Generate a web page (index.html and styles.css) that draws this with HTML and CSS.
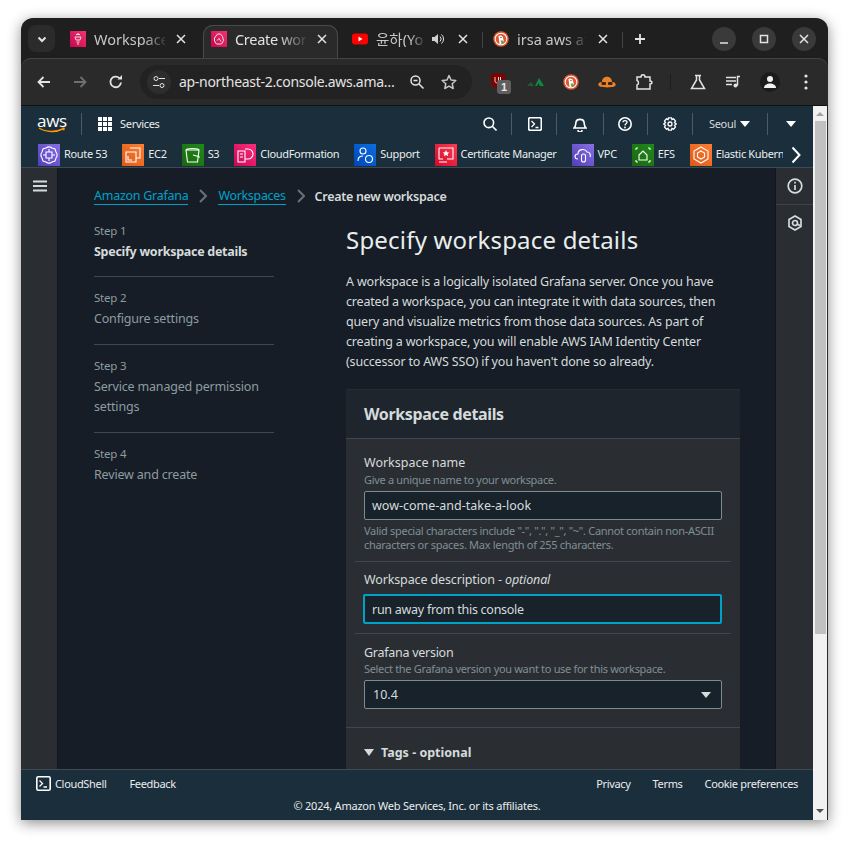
FILE: index.html
```html
<!DOCTYPE html>
<html lang="en">
<head>
<meta charset="utf-8">
<title>Create workspace</title>
<link rel="stylesheet" href="styles.css">
</head>
<body>
<div class="window">
  <div class="tabstrip">
    <div class="tab-search"><svg width="12" height="12" viewBox="0 0 12 12"><path d="M2.500 4.500 6 8l3.500-3.500" class="st-w2"/></svg></div>
    <div class="tab tab-1">
      <span class="fav fav-pink"><svg width="16" height="16" viewBox="0 0 16 16"><path d="M6 3.500h4M5 6h6l-1 3H6zM6.500 11h3M7 13h2M8 2v2" class="st-w1"/></svg></span>
      <span class="tab-title">Workspace</span>
      <svg class="tab-x" width="10" height="10" viewBox="0 0 10 10"><path d="M1 1l8 8M9 1l-8 8" class="st-w1-5"/></svg>
    </div>
    <div class="tab tab-active">
      <span class="fav fav-pink"><svg width="16" height="16" viewBox="0 0 16 16"><path d="M3.500 7 6.500 3h3l2 2.500 1 4-2 3.500h-5l-2-3zM6 9.500 8 7.500l2 3" class="st-w1"/></svg></span>
      <span class="tab-title">Create wor</span>
      <svg class="tab-x" width="10" height="10" viewBox="0 0 10 10"><path d="M1 1l8 8M9 1l-8 8" class="st-w1-5"/></svg>
    </div>
    <div class="tab tab-3">
      <span class="fav"><svg width="16" height="16" viewBox="0 0 16 16"><rect y="2.500" width="16" height="11" rx="3" fill="#f00"/><path d="M6.500 5.500 10.500 8l-4 2.500z" fill="#fff"/></svg></span>
      <span class="tab-title tab-title-yt">윤하(Yo</span>
      <svg class="tab-audio" width="14" height="14" viewBox="0 0 14 14"><path d="M1 5h2.500L7 2v10L3.500 9H1z" fill="#d0d0d0"/><path d="M9 4.500a3.500 3.500 0 0 1 0 5M10.500 2.500a6 6 0 0 1 0 9" class="st-w1"/></svg>
      <svg class="tab-x" width="10" height="10" viewBox="0 0 10 10"><path d="M1 1l8 8M9 1l-8 8" class="st-w1-5"/></svg>
    </div>
    <span class="tab-sep"></span>
    <div class="tab tab-4">
      <span class="fav"><svg width="16" height="16" viewBox="0 0 16 16"><circle cx="8" cy="8" r="7.800" fill="#de5833"/><circle cx="8" cy="8" r="6.300" fill="#fff"/><circle cx="8" cy="8" r="5.300" fill="#de5833"/><path d="M5.500 5c2-1.200 4.500-.5 4.500 2l.8 3-2.300 3H6.500z" fill="#fff"/><path d="M7.500 9.500l1 3.500 2-1.500-.5-2z" fill="#4caf50"/><circle cx="8" cy="6.500" r=".7" fill="#2d4f8e"/></svg></span>
      <span class="tab-title">irsa aws at</span>
      <svg class="tab-x" width="10" height="10" viewBox="0 0 10 10"><path d="M1 1l8 8M9 1l-8 8" class="st-w1-5"/></svg>
    </div>
    <span class="tab-sep"></span>
    <svg class="tab-new" width="12" height="12" viewBox="0 0 12 12"><path d="M6 1v10M1 6h10" class="st-w2-plain"/></svg>
    <div class="win-btns">
      <span class="win-btn"><svg width="10" height="10" viewBox="0 0 10 10"><path d="M1 9h8" class="st-w1-5"/></svg></span>
      <span class="win-btn"><svg width="10" height="10" viewBox="0 0 10 10"><rect x="1.500" y="1.500" width="7" height="7" class="st-w1-5"/></svg></span>
      <span class="win-btn"><svg width="10" height="10" viewBox="0 0 10 10"><path d="M1 1l8 8M9 1l-8 8" class="st-w1-5"/></svg></span>
    </div>
  </div>

  <div class="toolbar">
    <svg class="tb-back" width="16" height="16" viewBox="0 0 16 16"><path d="M14 8H3M7.500 3 2.500 8l5 5" class="st-w2-plain"/></svg>
    <svg class="tb-fwd" width="16" height="16" viewBox="0 0 16 16"><path d="M2 8h11M8.500 3l5 5-5 5" class="st-dim"/></svg>
    <svg class="tb-reload" width="16" height="16" viewBox="0 0 16 16"><path d="M13 8.500A5.300 5.300 0 1 1 11.500 4.200" class="st-w2-plain"/><path d="M9.500 5.500H14V1z" fill="#e3e3e3"/></svg>
    <div class="omnibox">
      <span class="tune"><svg width="14" height="14" viewBox="0 0 14 14"><circle cx="4" cy="3.500" r="2" class="st-w1"/><path d="M7 3.500h6M1 10.500h6" class="st-w1"/><circle cx="10" cy="10.500" r="2" class="st-w1"/></svg></span>
      <span class="url">ap-northeast-2.console.aws.ama…</span>
      <svg class="omni-zoom" width="16" height="16" viewBox="0 0 16 16"><circle cx="6.500" cy="6.500" r="4.500" class="st-w1-5"/><path d="M4.500 6.500h4M10 10l4.500 4.500" class="st-w1-5"/></svg>
      <svg class="omni-star" width="16" height="16" viewBox="0 0 16 16"><path d="M8 1.500l2 4.500 4.800.5-3.600 3.200 1 4.800L8 12.100l-4.200 2.400 1-4.800L1.200 6.500 6 6z" class="st-w1-5 st-round"/></svg>
    </div>
    <div class="ext">
      <span class="ext-ublock"><svg width="16" height="18" viewBox="0 0 16 18"><path d="M1 2.500 8 1l7 1.500v7C15 13 12 15.500 8 17 4 15.500 1 13 1 9.500z" fill="#800000"/><path d="M5 5v4c0 2.500 3.500 2.500 3.500 0V5M10.500 5v6" stroke="#ddd" stroke-width="1" fill="none"/></svg><span class="ublock-badge">1</span></span>
      <svg class="ext-mtn" width="20" height="12" viewBox="0 0 20 12"><path d="M9 10 13 2l5 8h-4l-1.500-3L11 10z" fill="#0d8a3f"/><path d="M1 10l4-4 3 4z" fill="#1f5c33"/></svg>
      <svg class="ext-ddg" width="16" height="16" viewBox="0 0 16 16"><circle cx="8" cy="8" r="7.800" fill="#de5833"/><circle cx="8" cy="8" r="6.300" fill="#fff"/><circle cx="8" cy="8" r="5.300" fill="#de5833"/><path d="M5.500 5c2-1.200 4.500-.5 4.500 2l.8 3-2.300 3H6.500z" fill="#fff"/><path d="M7.500 9.500l1 3.500 2-1.500-.5-2z" fill="#4caf50"/><circle cx="8" cy="6.500" r=".7" fill="#2d4f8e"/></svg>
      <svg class="ext-hat" width="18" height="14" viewBox="0 0 18 14"><path d="M4 7c0-7 10-7 10 0 3 0 4 1.500 3.500 3.500C16.500 13 2 13 .5 10.500 0 8.500 1 7 4 7z" fill="#e8832a"/><rect x="3.500" y="7" width="4.500" height="3" rx="1" fill="#3a2512"/><rect x="10" y="7" width="4.500" height="3" rx="1" fill="#3a2512"/></svg>
      <svg class="ext-puzzle" width="18" height="18" viewBox="0 0 18 18"><path d="M2 4h4c0-3 4-3 4 0h5v4c2.500 0 2.500 3 0 3v5H2v-4c2-.5 2-4 0-4.500z" class="st-w1-5"/></svg>
      <span class="ext-sep"></span>
      <svg class="ext-flask" width="16" height="16" viewBox="0 0 16 16"><path d="M5 1.500h6M6.500 1.500V6L1.500 14.500h13L9.500 6V1.500" class="st-w1-5"/></svg>
      <svg class="ext-music" width="16" height="14" viewBox="0 0 16 14"><path d="M0 2.500h10M0 6h10M0 9.500h6M14 1.500h-2.500v9" class="st-w1-5"/><circle cx="9.500" cy="10.500" r="2" fill="#e3e3e3"/></svg>
      <span class="ext-avatar"><svg width="14" height="14" viewBox="0 0 14 14"><circle cx="7" cy="4" r="3" fill="#f0f0f0"/><path d="M1 13c0-6 12-6 12 0z" fill="#f0f0f0"/></svg></span>
      <svg class="ext-dots" width="4" height="16" viewBox="0 0 4 16"><circle cx="2" cy="2" r="1.600" fill="#e3e3e3"/><circle cx="2" cy="8" r="1.600" fill="#e3e3e3"/><circle cx="2" cy="14" r="1.600" fill="#e3e3e3"/></svg>
    </div>
  </div>

  <div class="viewport">
    <div class="page">
      <header class="console-head">
        <div class="topbar">
          <div class="aws-logo"><span class="aws-word">aws</span><svg width="28" height="6" viewBox="0 0 28 6"><path d="M1 1c7 4.500 17 4.500 25 .5" stroke="#f90" stroke-width="1.400" fill="none"/><path d="M23.500 .5 27 .8 26 4z" fill="#f90"/></svg></div>
          <span class="tb-div tb-div-first"></span>
          <svg class="grid-ico" width="14" height="14" viewBox="0 0 14 14"><path d="M0 0h4v4H0zM5 0h4v4H5zM10 0h4v4h-4zM0 5h4v4H0zM5 5h4v4H5zM10 5h4v4h-4zM0 10h4v4H0zM5 10h4v4H5zM10 10h4v4h-4z" fill="#fff"/></svg>
          <span class="svc-label">Services</span>
          <div class="top-right">
            <svg class="i-search" width="14" height="14" viewBox="0 0 14 14"><circle cx="5.800" cy="5.800" r="4.800" class="st-head"/><path d="M9.500 9.500 13.500 13.500" class="st-head"/></svg>
            <span class="tb-div d1"></span>
            <svg class="i-term" width="14" height="14" viewBox="0 0 14 14"><rect x=".7" y=".7" width="12.600" height="12.600" rx="1.500" class="st-head"/><path d="M3.500 4 6.500 7l-3 3M7.500 10.500h3" class="st-head-thin"/></svg>
            <span class="tb-div d2"></span>
            <svg class="i-bell" width="14" height="15" viewBox="0 0 14 15"><path d="M1 11c2-1.500 1.500-4 2-6 .7-3.500 7.300-3.500 8 0 .5 2 0 4.500 2 6z" class="st-head"/><path d="M5 13a2 2 0 0 0 4 0" class="st-head"/></svg>
            <span class="tb-div d3"></span>
            <svg class="i-help" width="14" height="14" viewBox="0 0 14 14"><circle cx="7" cy="7" r="6.200" class="st-head"/><path d="M5 5.300C5 3 9 3 9 5.300 9 6.800 7 6.800 7 8.500" class="st-head-thin"/><circle cx="7" cy="10.500" r=".9" fill="#fff"/></svg>
            <span class="tb-div d4"></span>
            <svg class="i-gear" width="14" height="14" viewBox="0 0 14 14"><path d="M5.500 .8h3l.4 1.800 1.700-.7 1.900 2.200-1 1.500 1.700 1.400-1.700 1.400 1 1.500-1.900 2.200-1.700-.7-.4 1.800h-3l-.4-1.800-1.700.7L1.500 9.900l1-1.500L.8 7l1.700-1.400-1-1.500 1.900-2.200 1.700.7z" class="st-head-thin"/><circle cx="7" cy="7" r="2" class="st-head-thin"/></svg>
            <span class="tb-div d5"></span>
            <span class="region">Seoul</span>
            <span class="caret caret-region"></span>
            <span class="tb-div d6"></span>
            <span class="caret caret-acct"></span>
          </div>
        </div>
        <nav class="favs">
          <a class="fav-item"><span class="svc svc-purple"><svg viewBox="0 0 22 22"><path d="M8 4c2-1.500 4-1.500 6 0l3 1 1 3c1.500 2 1.500 4 0 6l-1 3-3 1c-2 1.500-4 1.500-6 0l-3-1-1-3c-1.500-2-1.500-4 0-6l1-3zM8 8h6v6H8zM8 11H5M14 11h3M11 8V5M11 14v3" class="st-svc"/></svg></span>Route 53</a>
          <a class="fav-item"><span class="svc svc-orange"><svg viewBox="0 0 22 22"><path d="M8 4h10v10h-4M4 8h10v10H4zM6 12v4h4" class="st-svc"/></svg></span>EC2</a>
          <a class="fav-item"><span class="svc svc-green"><svg viewBox="0 0 22 22"><path d="M4 6h13l-1.500 12h-10zM4 6c0-2 13-2 13 0M11 11l7 2" class="st-svc"/></svg></span>S3</a>
          <a class="fav-item"><span class="svc svc-pink"><svg viewBox="0 0 22 22"><path d="M4 7h7v11H4zM6 10h3M6 13h3M11 5h3a4 4 0 0 1 0 10h-3" class="st-svc"/></svg></span>CloudFormation</a>
          <a class="fav-item"><span class="svc svc-blue"><svg viewBox="0 0 22 22"><circle cx="9" cy="7" r="3" class="st-svc"/><path d="M4 17c0-4 2-5 5-5" class="st-svc"/><circle cx="15" cy="15" r="3.500" class="st-svc"/></svg></span>Support</a>
          <a class="fav-item"><span class="svc svc-red"><svg viewBox="0 0 22 22"><path d="M4 4h14v11h-6M8 15H4V4M4 18h8" class="st-svc"/><path d="M11 6l1 2.200 2.300.2-1.700 1.600.5 2.300L11 11.100 8.900 12.300l.5-2.300-1.700-1.600 2.300-.2z" fill="#fff"/></svg></span>Certificate Manager</a>
          <a class="fav-item"><span class="svc svc-violet"><svg viewBox="0 0 22 22"><path d="M6 15c-4 0-4-5 0-5 0-5 7-6 9-2 3 0 4 3 3 5" class="st-svc"/><rect x="9.500" y="10" width="4" height="8" rx="2" class="st-svc"/></svg></span>VPC</a>
          <a class="fav-item"><span class="svc svc-green"><svg viewBox="0 0 22 22"><path d="M7 11l4-4 4 4v5H7zM4 4h2M16 4h2M4 18h2M16 18h2M4 4v2M18 4v2M4 16v2M18 16v2" class="st-svc"/></svg></span>EFS</a>
          <a class="fav-item"><span class="svc svc-orange"><svg viewBox="0 0 22 22"><path d="M11 3l7 4v8l-7 4-7-4V7zM11 7l3.500 2v4L11 15l-3.500-2V9z" class="st-svc"/></svg></span>Elastic Kubern</a>
          <svg class="favs-more" width="10" height="18" viewBox="0 0 10 18"><path d="M1.500 1.500 8.500 9l-7 7.500" class="st-more"/></svg>
        </nav>
      </header>

      <div class="body-row">
        <aside class="rail-left">
          <svg width="14" height="12" viewBox="0 0 14 12"><path d="M0 1.500h14M0 6h14M0 10.500h14" stroke="#d5dbdb" stroke-width="2"/></svg>
        </aside>

        <main class="content">
          <div class="crumbs">
            <a class="crumb-link">Amazon Grafana</a>
            <svg width="8" height="14" viewBox="0 0 8 14"><path d="M1 1l6 6-6 6" class="st-crumb"/></svg>
            <a class="crumb-link">Workspaces</a>
            <svg width="8" height="14" viewBox="0 0 8 14"><path d="M1 1l6 6-6 6" class="st-crumb"/></svg>
            <span class="crumb-here">Create new workspace</span>
          </div>
          <div class="wizard">
            <ol class="steps">
              <li class="step step-on"><small>Step 1</small><span>Specify workspace details</span></li>
              <li class="step"><small>Step 2</small><span>Configure settings</span></li>
              <li class="step"><small>Step 3</small><span>Service managed permission settings</span></li>
              <li class="step step-end"><small>Step 4</small><span>Review and create</span></li>
            </ol>
            <section class="form">
              <h1>Specify workspace details</h1>
              <p class="intro">A workspace is a logically isolated Grafana server. Once you have created a workspace, you can integrate it with data sources, then query and visualize metrics from those data sources. As part of creating a workspace, you will enable AWS IAM Identity Center (successor to AWS SSO) if you haven't done so already.</p>
              <div class="card">
                <h2>Workspace details</h2>
                <div class="card-fields">
                  <div class="field field-name">
                    <label>Workspace name</label>
                    <div class="desc">Give a unique name to your workspace.</div>
                    <div class="inp">wow-come-and-take-a-look</div>
                    <div class="hint">Valid special characters include "-", ".", "_", "~". Cannot contain non-ASCII characters or spaces. Max length of 255 characters.</div>
                  </div>
                  <div class="field field-desc">
                    <label>Workspace description - <em>optional</em></label>
                    <div class="inp inp-focus">run away from this console</div>
                  </div>
                  <div class="field field-ver">
                    <label>Grafana version</label>
                    <div class="desc">Select the Grafana version you want to use for this workspace.</div>
                    <div class="inp inp-select">10.4<span class="caret caret-select"></span></div>
                  </div>
                </div>
                <div class="tags"><span class="caret caret-tags"></span>Tags - optional</div>
              </div>
            </section>
          </div>
        </main>

        <aside class="rail-right">
          <div class="rail-btn"><svg width="16" height="16" viewBox="0 0 16 16"><circle cx="8" cy="8" r="6.800" class="st-rail"/><path d="M8 7v5M8 3.800v1.800" class="st-rail"/></svg></div>
          <div class="rail-btn"><svg width="14" height="16" viewBox="0 0 14 16"><path d="M7 1l6 3.500v7L7 15l-6-3.500v-7z" class="st-rail"/><circle cx="7" cy="8" r="2.500" class="st-rail"/><path d="M9 9l3 1.500" class="st-rail"/></svg></div>
        </aside>
      </div>

      <footer class="console-foot">
        <div class="foot-row">
          <svg width="15" height="15" viewBox="0 0 15 15"><rect x=".8" y=".8" width="13.400" height="13.400" rx="1.500" class="st-head"/><path d="M3.500 4.500 6.500 7.500l-3 3M7.500 11h3.500" class="st-head-thin"/></svg>
          <a class="foot-cs">CloudShell</a>
          <a class="foot-fb">Feedback</a>
          <div class="foot-legal"><a>Privacy</a><a>Terms</a><a>Cookie preferences</a></div>
        </div>
        <div class="foot-copy">© 2024, Amazon Web Services, Inc. or its affiliates.</div>
      </footer>
    </div>

    <div class="scrollbar">
      <span class="sb-up"></span>
      <span class="sb-thumb"></span>
      <span class="sb-down"></span>
    </div>
  </div>
</div>
</body>
</html>
```
FILE: styles.css
```css
* { box-sizing: border-box; }
html, body { margin: 0; height: 100%; background: #fff; overflow: hidden; }
body { padding: 18px 21px 24px; font-family: "Noto Sans", sans-serif; color: #d5dbdb; }

.window {
  width: 807px; height: 802px; display: flex; flex-direction: column;
  border-radius: 12px 12px 0 0; overflow: hidden; background: #1f1f1f;
  box-shadow: 0 3px 14px rgba(0,0,0,.45);
}

/* svg strokes */
svg { display: block; flex: none; }
.st-w1, .st-w1-5, .st-w2, .st-w2-plain, .st-dim, .st-head, .st-head-thin, .st-svc, .st-more, .st-crumb, .st-rail { fill: none; }
.st-w1 { stroke: #e3e3e3; stroke-width: 1; }
.st-w1-5 { stroke: #e3e3e3; stroke-width: 1.5; }
.st-round { stroke: #c7c7c7; stroke-linejoin: round; }
.st-w2 { stroke: #e3e3e3; stroke-width: 2; }
.st-w2-plain { stroke: #e3e3e3; stroke-width: 1.8; }
.st-dim { stroke: #6f6f6f; stroke-width: 1.8; }
.st-head { stroke: #fff; stroke-width: 1.6; }
.st-head-thin { stroke: #fff; stroke-width: 1.3; }
.st-svc { stroke: #fff; stroke-width: 1.1; }
.st-more { stroke: #fff; stroke-width: 2; }
.st-crumb { stroke: #687078; stroke-width: 2; }
.st-rail { stroke: #d5dbdb; stroke-width: 1.7; }

/* tab strip */
.tabstrip { height: 40px; flex: none; display: flex; position: relative; padding: 7px 0 0 7px; color: #c7c7c7; font-size: 14.500px; }
.tab-search { width: 27px; height: 27px; border-radius: 8px; background: #2b2b2b; display: flex; align-items: center; justify-content: center; }
.tab { display: flex; align-items: flex-start; height: 33px; padding-top: 6px; flex: none; }
.tab-1 { width: 148px; padding-left: 15px; }
.tab-active { width: 135px; padding-left: 8px; background: #2a2a2a; border-radius: 10px 10px 0 0; box-shadow: inset 0 1px 0 #4a4a4a, inset 1px 0 0 #4a4a4a, inset -1px 0 0 #4a4a4a; color: #e3e3e3; }
.tab-active .tab-title { letter-spacing: -.3px; -webkit-mask-image: linear-gradient(90deg, #000 60%, rgba(0,0,0,.1)); mask-image: linear-gradient(90deg, #000 60%, rgba(0,0,0,.1)); }
.tab-3 { width: 144px; padding-left: 14px; }
.tab-4 { width: 139px; padding-left: 10px; }
.fav { width: 16px; height: 16px; flex: none; display: block; }
.fav-pink { background: linear-gradient(45deg, #c7054f, #f5336f); }
.tab-title { width: 71px; margin-left: 8px; white-space: nowrap; line-height: 16px; -webkit-mask-image: linear-gradient(90deg, #000 70%, rgba(0,0,0,.15)); mask-image: linear-gradient(90deg, #000 70%, rgba(0,0,0,.15)); }
.tab-title-yt { width: 48px; font-family: "Noto Sans", "Noto Sans CJK KR", sans-serif; }
.tab-x { margin: 3px 0 0 11px; }
.tab-audio { margin: 1px 0 0 7px; }
.tab-3 .tab-x { margin-left: 13px; }
.tab-4 .tab-title { width: 68px; margin-left: 8px; }
.tab-4 .tab-x { margin-left: 13px; }
.tab-sep { width: 1px; height: 16px; background: #444; margin-top: 7px; flex: none; }
.tab-new { margin: 8px 0 0 11px; }
.win-btns { margin-left: auto; display: flex; gap: 16px; padding-right: 12px; }
.win-btn { width: 24px; height: 24px; border-radius: 50%; background: #3a3a3a; display: flex; align-items: center; justify-content: center; margin-top: 2px; }

/* toolbar */
.toolbar { height: 47px; flex: none; display: flex; align-items: center; background: #2a2a2a; border-radius: 10px 10px 0 0; box-shadow: inset 0 1px 0 #444; padding-left: 15px; position: relative; color: #e3e3e3; }
.tb-fwd { margin-left: 20px; }
.tb-reload { margin-left: 20px; }
.omnibox { width: 332px; height: 34px; margin-left: 16px; border-radius: 17px; background: #222; display: flex; align-items: center; padding-left: 7px; }
.tune { width: 24px; height: 24px; border-radius: 50%; background: #2d2d2d; display: flex; align-items: center; justify-content: center; flex: none; }
.url { margin-left: 8px; width: 216px; font-size: 14px; letter-spacing: -.3px; white-space: nowrap; line-height: 20px; }
.omni-zoom { margin-left: 14px; }
.omni-star { margin-left: 16px; }
.ext { display: flex; align-items: center; margin-left: 18px; }
.ext-ublock { position: relative; width: 16px; height: 18px; display: block; margin-top: -2px; }
.ublock-badge { position: absolute; left: 7px; top: 8px; width: 14px; height: 14px; border-radius: 3px; background: #5f5f5f; color: #e8e8e8; font: bold 11px/14px "Liberation Sans", sans-serif; text-align: center; }
.ext-mtn { margin-left: 20px; }
.ext-ddg { margin-left: 17px; }
.ext-hat { margin-left: 19px; }
.ext-puzzle { margin-left: 19px; }
.ext-sep { width: 1px; height: 16px; background: #1d1d1d; margin-left: 17px; }
.ext-flask { margin-left: 19px; }
.ext-music { margin-left: 20px; }
.ext-avatar { width: 20px; height: 20px; border-radius: 50%; background: #1b1b1b; display: flex; align-items: center; justify-content: center; margin-left: 18px; }
.ext-dots { margin-left: 24px; }

/* viewport */
.viewport { flex: 1; min-height: 0; display: flex; border-top: 1px solid #111; border-right: 1px solid #2b2b2b; }
.page { flex: 1; min-width: 0; display: flex; flex-direction: column; overflow: hidden; }
.scrollbar { width: 14px; flex: none; background: #f1f1f1; position: relative; display: flex; flex-direction: column; align-items: center; padding: 0; }
.sb-up { margin-top: 6px; width: 0; height: 0; border-left: 4px solid transparent; border-right: 4px solid transparent; border-bottom: 4px solid #a3a3a3; }
.sb-thumb { width: 11px; height: 513px; background: #c1c1c1; margin-top: 5px; }
.sb-down { margin-top: auto; margin-bottom: 7px; width: 0; height: 0; border-left: 4px solid transparent; border-right: 4px solid transparent; border-top: 4px solid #505050; }

/* console header */
.console-head { background: #1b2e3c; flex: none; height: 62px; border-bottom: 1px solid #414a52; color: #fff; }
.topbar { height: 36px; display: flex; align-items: center; padding-left: 17px; position: relative; font-size: 11px; letter-spacing: -.3px; }
.aws-logo { width: 28px; display: flex; flex-direction: column; align-items: center; }
.aws-word { font: 400 17px/12px "Open Sans", sans-serif; height: 12px; letter-spacing: -.3px; }
.tb-div { width: 1px; height: 22px; background: #4b5c68; flex: none; }
.tb-div-first { margin-left: 15px; }
.grid-ico { margin-left: 16px; }
.svc-label { margin-left: 8px; color: #eaeded; line-height: 14px; margin-top: -1px; }
.top-right { margin-left: auto; display: flex; align-items: center; }
.i-search { margin-right: 14px; }
.d1 { margin-right: 16px; }
.i-term { margin-right: 14px; }
.d2 { margin-right: 16px; }
.i-bell { margin-right: 16px; }
.d3 { margin-right: 14px; }
.i-help { margin-right: 15px; }
.d4 { margin-right: 15px; }
.i-gear { margin-right: 15px; }
.d5 { margin-right: 16px; }
.region { color: #d5dbdb; line-height: 14px; margin-top: -1px; }
.caret { width: 0; height: 0; border-left: 5px solid transparent; border-right: 5px solid transparent; border-top: 6px solid #fff; display: block; flex: none; }
.caret-region { margin: 0 17px 0 4px; }
.d6 { margin-right: 18px; }
.caret-acct { margin-right: 17px; }

.favs { height: 25px; display: flex; align-items: flex-start; padding: 2px 0 0 17px; position: relative; font-size: 11px; letter-spacing: -.33px; color: #eaeded; gap: 15px; overflow: hidden; }
.fav-item { display: flex; align-items: flex-start; gap: 4px; white-space: nowrap; flex: none; line-height: 20px; }
.svc { width: 22px; height: 22px; flex: none; display: block; }
.svc svg { width: 22px; height: 22px; }
.svc-purple { background: linear-gradient(45deg, #4f3fb5, #8a6fe6); }
.svc-orange { background: linear-gradient(45deg, #dc5a18, #ff7e32); }
.svc-green { background: linear-gradient(45deg, #1b660f, #1f8a1a); }
.svc-pink { background: linear-gradient(45deg, #c9075a, #ff2d78); }
.svc-blue { background: linear-gradient(45deg, #0046b8, #0b6fe0); }
.svc-red { background: linear-gradient(45deg, #d10a2a, #ff3a52); }
.svc-violet { background: linear-gradient(45deg, #4f3fb5, #8a6fe6); }
.favs-more { position: absolute; right: 12px; top: 4px; background: #1b2e3c; box-shadow: -3px 0 0 5px #1b2e3c; width: 10px; }

/* body */
.body-row { flex: 1; min-height: 0; display: flex; }
.rail-left { width: 37px; flex: none; background: #2a2e33; border-right: 1px solid #12161b; padding: 12px 0 0 12px; }
.content { flex: 1; min-width: 0; background: #161d26; padding: 18px 0 0 36px; overflow: hidden; }
.rail-right { width: 38px; flex: none; background: #2a2e33; border-left: 1px solid #12161b; }
.rail-btn { height: 37px; display: flex; align-items: center; justify-content: center; border-bottom: 1px solid #3c4248; }
.rail-btn:last-child { border-bottom: 0; height: 35px; }

.crumbs { display: flex; align-items: center; gap: 11px; height: 20px; font-size: 12.500px; letter-spacing: -.27px; }
.crumb-link { color: #00a1c9; border-bottom: 1px solid #00a1c9; line-height: 16px; height: 17px; }
.crumb-link + svg + .crumb-link { letter-spacing: -.33px; }
.crumb-here { font-weight: 600; color: #d5dbdb; letter-spacing: -.3px; margin-left: -1px; }

.wizard { display: grid; grid-template-columns: 180px 394px; column-gap: 72px; margin-top: 16px; align-items: start; }
.steps { list-style: none; margin: 0; padding: 1px 0 0; }
.step { padding-bottom: 15px; margin-bottom: 13px; border-bottom: 1px solid #414750; font-size: 12.500px; letter-spacing: -.18px; line-height: 20px; color: #8d9ca0; }
.step small { display: block; font-size: 11.500px; letter-spacing: -.2px; line-height: 15px; margin-bottom: 4px; }
.step span { display: block; }
.step-on { color: #d5dbdb; padding-bottom: 14px; }
.step-on small { color: #8d9ca0; }
.step-on span { font-weight: 700; letter-spacing: -.28px; }
.step-end { border-bottom: 0; }

.form h1 { margin: 0; font-size: 24px; letter-spacing: .2px; font-weight: 400; line-height: 36px; color: #eaeded; }
.intro { margin: 14px 0 18px; font-size: 12.500px; letter-spacing: -.18px; line-height: 20px; color: #d5dbdb; }

.card { background: #2a2e33; box-shadow: 0 -1px 0 #262b31; }
.card h2 { margin: 0; height: 49px; background: #1e252d; border-bottom: 1px solid #414750; font-size: 16px; letter-spacing: -.35px; font-weight: 700; line-height: 48px; padding-left: 18px; color: #d5dbdb; }
.card-fields { padding: 0 9px; border-bottom: 1px solid #414750; }
.field { padding: 0 9px; }
.field label { display: block; font-size: 12.500px; line-height: 18px; color: #d5dbdb; }
.field + .field { border-top: 1px solid #414750; }
.field-name { padding-top: 15px; padding-bottom: 9px; }
.field-desc { padding-top: 9px; padding-bottom: 9px; }
.field-desc label { letter-spacing: -.13px; }
.field-ver { padding-top: 10px; padding-bottom: 18px; }
.field-ver label { letter-spacing: -.27px; }
.desc { font-size: 11px; letter-spacing: -.32px; line-height: 14px; margin: 1px 0 4px; color: #7f8f93; }
.field-ver .desc { margin: 0 0 4px; }
.inp { height: 29px; background: #18222a; border: 1px solid #7e8b91; border-radius: 2px; font-size: 12.500px; line-height: 27px; padding-left: 7px; color: #d5dbdb; position: relative; }
.inp-focus { height: 30px; margin-top: 5px; border: 2px solid #00a1c9; line-height: 27px; width: 359px; margin-left: -1px; padding-left: 7px; letter-spacing: -.27px; }
.hint { font-size: 11px; letter-spacing: -.3px; line-height: 14px; margin-top: 4px; color: #7f8f93; }
.inp-select { display: flex; align-items: center; justify-content: space-between; padding-right: 10px; padding-left: 8px; }
.caret-select { border-top-color: #d5dbdb; }
.tags { height: 48px; display: flex; align-items: center; gap: 7px; padding-left: 18px; font-size: 12.500px; font-weight: 700; color: #d5dbdb; }
.caret-tags { border-top-color: #d5dbdb; border-left-width: 5px; border-right-width: 5px; border-top-width: 7px; }

/* footer */
.console-foot { flex: none; height: 51px; background: #1b2e3c; border-top: 1px solid #414a52; color: #eaeded; font-size: 11px; letter-spacing: -.33px; }
.foot-row { height: 27px; padding: 0 15px; display: flex; align-items: center; }
.foot-cs { margin-left: 4px; }
.foot-fb { margin-left: 23px; }
.foot-legal { margin-left: auto; display: flex; gap: 22px; }
.foot-copy { text-align: center; line-height: 14px; margin-top: 2px; letter-spacing: -.23px; }
```
